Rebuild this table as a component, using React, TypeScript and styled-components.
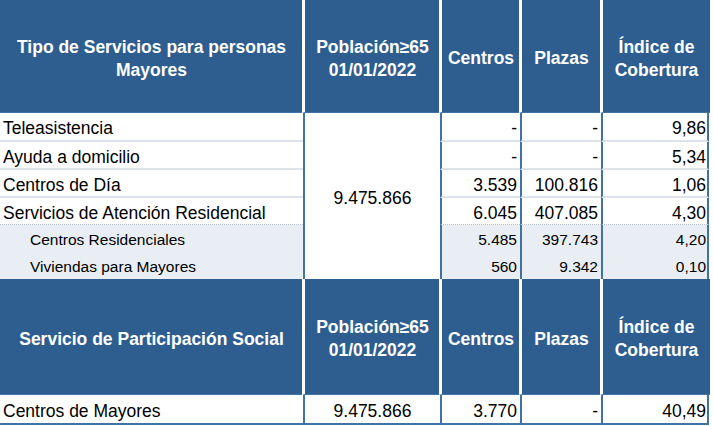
import React from "react";
import styled, { createGlobalStyle } from "styled-components";

const GlobalStyle = createGlobalStyle`
  html, body { margin: 0; padding: 0; background: #ffffff; }
  body { font-family: "Liberation Sans", Arial, sans-serif; color: #000; }
`;

const BLUE = "#2d5e8f";
const LINE = "#4272a2";
const SEP = "#dde3ea";
const SUB_BG = "#e9eef4";

const Table = styled.div`
  display: grid;
  width: 709px;
  grid-template-columns: 303px 137px 80px 81px 108px;
  grid-template-rows: 113px 29px 28px 28px 27px 27px 27px 116px 30px;
`;

const HeadCell = styled.div<{ $first?: boolean; $last?: boolean }>`
  box-sizing: border-box;
  background: ${BLUE};
  color: #fff;
  font-weight: 700;
  font-size: 17.5px;
  line-height: 23px;
  text-align: center;
  display: flex;
  align-items: center;
  justify-content: center;
  padding: 5px 4px 0;
  border-left: ${(p) => (p.$first ? "none" : "3px solid #fff")};
  margin-left: ${(p) => (p.$first ? "0" : "-1px")};
  margin-right: ${(p) => (p.$last ? "-1px" : "0")};
  border-bottom: 1px solid ${LINE};
`;

type Sep = "solid" | "dotted" | "none" | "blue";

const BodyCell = styled.div<{
  $right?: boolean;
  $sub?: boolean;
  $sep?: Sep;
  $col1?: boolean;
  $last?: boolean;
  $pr?: number;
}>`
  box-sizing: border-box;
  display: flex;
  align-items: center;
  justify-content: ${(p) => (p.$right ? "flex-end" : "flex-start")};
  background: ${(p) => (p.$sub ? SUB_BG : "#fff")};
  font-size: ${(p) => (p.$sub ? "15.5px" : "17.5px")};
  white-space: nowrap;
  padding-top: ${(p) => (p.$sub ? "3px" : "4px")};
  padding-left: ${(p) => (p.$col1 ? (p.$sub ? "30px" : "3px") : "0")};
  padding-right: ${(p) => (p.$right ? `${p.$pr ?? 3}px` : "0")};
  border-left: ${(p) => (p.$col1 ? "none" : `2px solid ${LINE}`)};
  border-right: ${(p) => (p.$last ? `2px solid ${LINE}` : "none")};
  border-bottom: ${(p) =>
    p.$sep === "solid"
      ? `2px solid ${SEP}`
      : p.$sep === "dotted"
      ? `1px dotted #b9c3cf`
      : p.$sep === "blue"
      ? `2px solid ${LINE}`
      : "none"};
`;

const SpanCell = styled.div<{ $rows: number; $sep?: Sep }>`
  box-sizing: border-box;
  grid-row: span ${(p) => p.$rows};
  display: flex;
  align-items: center;
  justify-content: center;
  font-size: 17.5px;
  padding-top: 4px;
  background: #fff;
  border-left: 2px solid ${LINE};
  border-bottom: ${(p) => (p.$sep === "blue" ? `2px solid ${LINE}` : "none")};
`;

type Row = {
  name: string;
  centros: string;
  plazas: string;
  indice: string;
  sub?: boolean;
  sep: Sep;
};

const rows: Row[] = [
  { name: "Teleasistencia", centros: "-", plazas: "-", indice: "9,86", sep: "solid" },
  { name: "Ayuda a domicilio", centros: "-", plazas: "-", indice: "5,34", sep: "solid" },
  { name: "Centros de Día", centros: "3.539", plazas: "100.816", indice: "1,06", sep: "solid" },
  { name: "Servicios de Atención Residencial", centros: "6.045", plazas: "407.085", indice: "4,30", sep: "dotted" },
  { name: "Centros Residenciales", centros: "5.485", plazas: "397.743", indice: "4,20", sub: true, sep: "none" },
  { name: "Viviendas para Mayores", centros: "560", plazas: "9.342", indice: "0,10", sub: true, sep: "none" },
];

const Header: React.FC<{ title: React.ReactNode }> = ({ title }) => (
  <>
    <HeadCell $first>{title}</HeadCell>
    <HeadCell>
      Población≥65
      <br />
      01/01/2022
    </HeadCell>
    <HeadCell>Centros</HeadCell>
    <HeadCell>Plazas</HeadCell>
    <HeadCell $last>
      Índice de
      <br />
      Cobertura
    </HeadCell>
  </>
);

export default function App() {
  return (
    <>
      <GlobalStyle />
      <Table>
        <Header
          title={
            <>
              Tipo de Servicios para personas
              <br />
              Mayores
            </>
          }
        />
        {rows.map((r, i) => (
          <React.Fragment key={r.name}>
            <BodyCell $col1 $sub={r.sub} $sep={r.sep} style={{ gridRow: i + 2, gridColumn: 1 }}>
              {r.name}
            </BodyCell>
            {i === 0 && (
              <SpanCell $rows={6} style={{ gridRow: "2 / span 6", gridColumn: 2 }}>
                9.475.866
              </SpanCell>
            )}
            <BodyCell $right $sub={r.sub} $sep={r.sep} style={{ gridRow: i + 2, gridColumn: 3 }}>
              {r.centros}
            </BodyCell>
            <BodyCell $right $sub={r.sub} $sep={r.sep} style={{ gridRow: i + 2, gridColumn: 4 }}>
              {r.plazas}
            </BodyCell>
            <BodyCell $right $last $pr={1} $sub={r.sub} $sep={r.sep} style={{ gridRow: i + 2, gridColumn: 5 }}>
              {r.indice}
            </BodyCell>
          </React.Fragment>
        ))}
        <Header title="Servicio de Participación Social" />
        <BodyCell $col1 $sep="blue">Centros de Mayores</BodyCell>
        <SpanCell $rows={1} $sep="blue">9.475.866</SpanCell>
        <BodyCell $right $sep="blue">3.770</BodyCell>
        <BodyCell $right $sep="blue">-</BodyCell>
        <BodyCell $right $last $pr={1} $sep="blue">40,49</BodyCell>
      </Table>
    </>
  );
}
